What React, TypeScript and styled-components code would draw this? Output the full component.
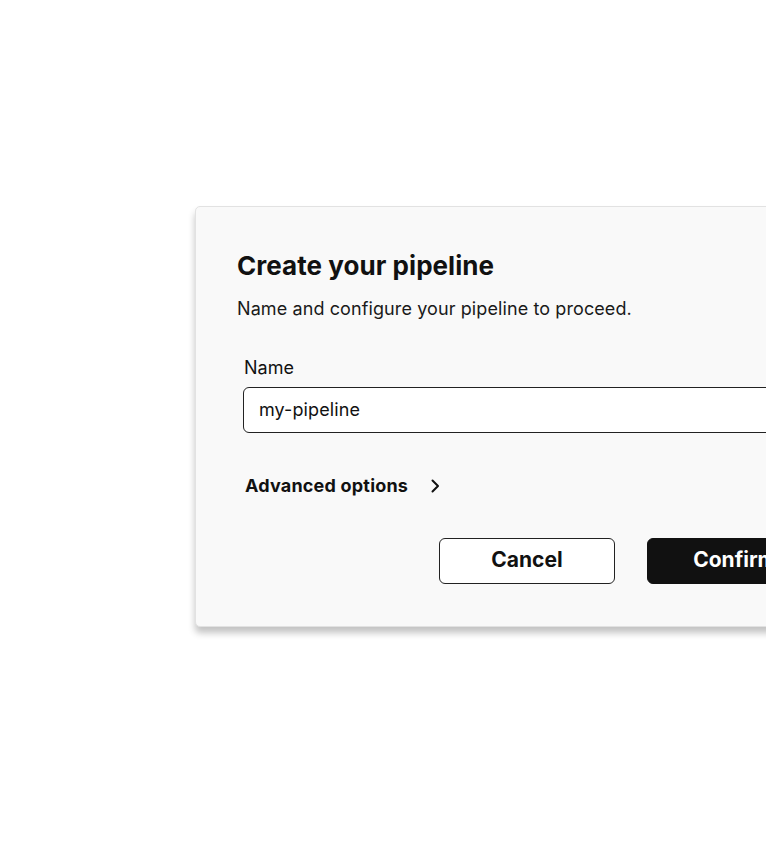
import React from "react";
import styled, { createGlobalStyle } from "styled-components";

const Global = createGlobalStyle`
  html, body { margin: 0; padding: 0; background: #ffffff; overflow: hidden; }
  body { font-family: Inter, "Noto Sans", sans-serif; color: #111; }
`;

const Page = styled.div`
  width: 766px;
  height: 856px;
  overflow: hidden;
  padding: 206px 0 0 195px;
  box-sizing: border-box;
`;

const Card = styled.div`
  width: 670px;
  box-sizing: border-box;
  background: #f9f9f9;
  border: 1px solid #e2e2e2;
  border-radius: 5px;
  box-shadow: 0 6px 7px rgba(0, 0, 0, 0.24);
  padding: 41px 41px 42px 41px;
  display: flex;
  flex-direction: column;
`;

const Title = styled.h1`
  margin: 0;
  font-size: 26px;
  font-weight: 700;
  line-height: 36px;
  letter-spacing: 0.05px;
  color: #111;
`;

const Subtitle = styled.p`
  margin: 13px 0 0;
  font-size: 18px;
  line-height: 24px;
  letter-spacing: 0.1px;
  color: #1a1a1a;
`;

const Field = styled.div`
  margin: 35px 0 0 6px;
  display: flex;
  flex-direction: column;
  gap: 7px;
`;

const Label = styled.label`
  font-size: 18px;
  line-height: 24px;
  padding-left: 1px;
  color: #111;
`;

const Input = styled.input`
  height: 46px;
  box-sizing: border-box;
  border: 1px solid #222;
  border-radius: 6px;
  background: #fff;
  padding: 0 15px 2px;
  font-family: inherit;
  font-size: 18px;
  letter-spacing: 0.1px;
  color: #111;
  outline: none;
`;

const Advanced = styled.button`
  margin: 41px 0 0 8px;
  align-self: flex-start;
  display: flex;
  align-items: center;
  gap: 22px;
  border: none;
  background: none;
  padding: 0;
  font-family: inherit;
  font-size: 18px;
  font-weight: 700;
  letter-spacing: 0.2px;
  line-height: 24px;
  color: #111;
  cursor: pointer;
`;

const Actions = styled.div`
  margin-top: 40px;
  display: flex;
  justify-content: flex-end;
  gap: 32px;
`;

const Button = styled.button<{ $primary?: boolean }>`
  width: 176px;
  height: 46px;
  box-sizing: border-box;
  border-radius: 6px;
  border: 1px solid ${(p) => (p.$primary ? "#111" : "#222")};
  background: ${(p) => (p.$primary ? "#111" : "#fff")};
  color: ${(p) => (p.$primary ? "#fff" : "#111")};
  font-family: inherit;
  font-size: 21px;
  font-weight: 700;
  padding: 0 0 4px;
  cursor: pointer;
`;

export default function App() {
  return (
    <>
      <Global />
      <Page>
        <Card>
          <Title>Create your pipeline</Title>
          <Subtitle>Name and configure your pipeline to proceed.</Subtitle>
          <Field>
            <Label htmlFor="name">Name</Label>
            <Input id="name" defaultValue="my-pipeline" />
          </Field>
          <Advanced>
            Advanced options
            <svg width="10" height="16" viewBox="0 0 10 16" fill="none">
              <path d="M2.5 2.5 L8 8 L2.5 13.5" stroke="#111" strokeWidth="2" strokeLinecap="round" strokeLinejoin="round" />
            </svg>
          </Advanced>
          <Actions>
            <Button>Cancel</Button>
            <Button $primary>Confirm</Button>
          </Actions>
        </Card>
      </Page>
    </>
  );
}
